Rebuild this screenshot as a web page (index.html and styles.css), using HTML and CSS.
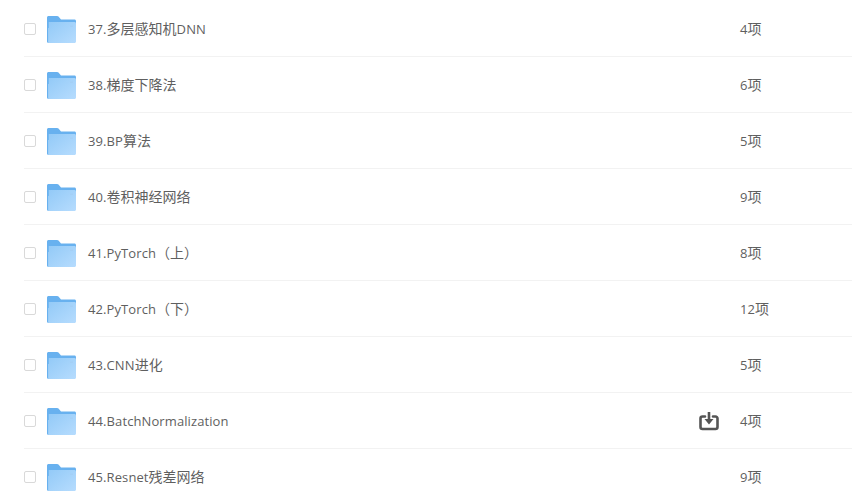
FILE: index.html
```html
<!DOCTYPE html>
<html lang="en">

<head>
    <meta charset="UTF-8">
    <title>Files</title>
    <link rel="stylesheet" href="styles.css">
</head>

<body>
    <svg width="0" height="0" class="defs">
        <defs>
            <linearGradient id="folder-front" x1="0" y1="0" x2="1" y2="1">
                <stop offset="0" stop-color="#93caf7" />
                <stop offset="1" stop-color="#b6dcfe" />
            </linearGradient>
            <symbol id="folder" viewBox="0 0 29 27">
                <path d="M0 1.500C0 .7.7 0 1.500 0h8.600c.6 0 1 .2 1.400.6L14 3.500H27.500C28.300 3.500 29 4.200 29 5V12H0Z" fill="#68b1ef" />
                <path d="M1.500 6H27.500C28.300 6 29 6.700 29 7.500V25.500C29 26.300 28.300 27 27.500 27H1.500Z" fill="url(#folder-front)" />
                <path d="M0 4H1.500V27C.7 27 0 26.300 0 25.500Z" fill="#68b1ef" />
                <rect x="23" y="9.500" width="3" height="1.500" fill="#a4cff5" />
            </symbol>
        </defs>
    </svg>
    <ul class="file-list">
        <li class="file-row">
            <span class="check"></span>
            <svg class="folder"><use href="#folder" /></svg>
            <span class="name">37.<span class="cjk">多层感知机</span>DNN</span>
            <span class="count">4<span class="cjk">项</span></span>
        </li>
        <li class="file-row">
            <span class="check"></span>
            <svg class="folder"><use href="#folder" /></svg>
            <span class="name">38.<span class="cjk">梯度下降法</span></span>
            <span class="count">6<span class="cjk">项</span></span>
        </li>
        <li class="file-row">
            <span class="check"></span>
            <svg class="folder"><use href="#folder" /></svg>
            <span class="name">39.BP<span class="cjk">算法</span></span>
            <span class="count">5<span class="cjk">项</span></span>
        </li>
        <li class="file-row">
            <span class="check"></span>
            <svg class="folder"><use href="#folder" /></svg>
            <span class="name">40.<span class="cjk">卷积神经网络</span></span>
            <span class="count">9<span class="cjk">项</span></span>
        </li>
        <li class="file-row">
            <span class="check"></span>
            <svg class="folder"><use href="#folder" /></svg>
            <span class="name">41.PyTorch<span class="cjk">（上）</span></span>
            <span class="count">8<span class="cjk">项</span></span>
        </li>
        <li class="file-row">
            <span class="check"></span>
            <svg class="folder"><use href="#folder" /></svg>
            <span class="name">42.PyTorch<span class="cjk">（下）</span></span>
            <span class="count">12<span class="cjk">项</span></span>
        </li>
        <li class="file-row">
            <span class="check"></span>
            <svg class="folder"><use href="#folder" /></svg>
            <span class="name">43.CNN<span class="cjk">进化</span></span>
            <span class="count">5<span class="cjk">项</span></span>
        </li>
        <li class="file-row">
            <span class="check"></span>
            <svg class="folder"><use href="#folder" /></svg>
            <span class="name">44.BatchNormalization</span>
            <svg class="download" viewBox="0 0 20 20">
                <path d="M6 5.500H3.500C2.400 5.500 1.500 6.400 1.500 7.500V16C1.500 17.100 2.400 18 3.500 18H16.500C17.600 18 18.500 17.100 18.500 16V7.500C18.500 6.400 17.600 5.500 16.500 5.500H14" fill="none" stroke="#555" stroke-width="2.600" stroke-linecap="round" />
                <path d="M8.700 1H11.300V8H14.500L10 13.500L5.500 8H8.700Z" fill="#555" />
            </svg>
            <span class="count">4<span class="cjk">项</span></span>
        </li>
        <li class="file-row">
            <span class="check"></span>
            <svg class="folder"><use href="#folder" /></svg>
            <span class="name">45.Resnet<span class="cjk">残差网络</span></span>
            <span class="count">9<span class="cjk">项</span></span>
        </li>
    </ul>
</body>

</html>
```

FILE: styles.css
```css
body {
    font-family: "Open Sans", "Noto Sans CJK SC", sans-serif;
    margin: 0;
    background-color: #ffffff;
    color: #5f5f5f;
    font-size: 13px;
    letter-spacing: 0.1px;
    overflow: hidden;
}

.cjk {
    font-size: 14px;
    letter-spacing: 0;
    line-height: 1;
}

.defs {
    position: absolute;
}

.file-list {
    list-style: none;
    margin: 0;
    padding: 1px 0 0 24px;
}

.file-row {
    display: flex;
    align-items: center;
    height: 55px;
    border-bottom: 1px solid #f2f2f2;
}

.check {
    width: 10px;
    height: 10px;
    border: 1px solid #d9d9d9;
    border-radius: 2px;
    margin-right: 11px;
}

.folder {
    width: 29px;
    height: 27px;
    margin: 2px 12px 0 0;
}

.name {
    flex: 1;
}

.download {
    width: 20px;
    height: 20px;
    margin-right: 21px;
}

.count {
    width: 112px;
}
```
